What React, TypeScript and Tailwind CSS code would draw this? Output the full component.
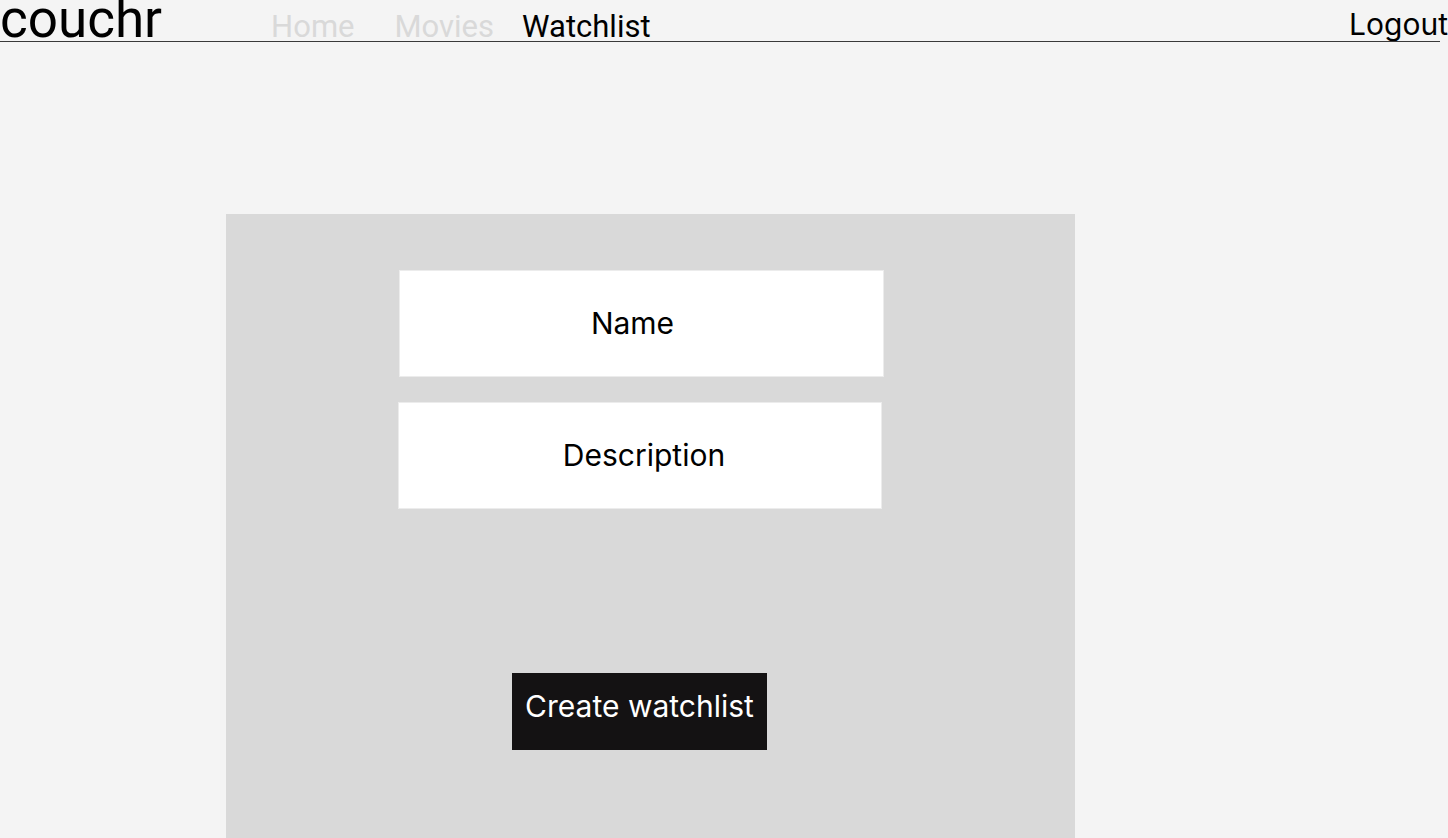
import React from "react";

export default function App() {
  return (
    <div className="h-[838px] overflow-hidden bg-[#f4f4f4] w-[1448px]">
      <header className="relative flex h-[42px] items-start w-[1440px]">
        <div
          className="text-[53px] leading-[38px] text-black"
          style={{ fontFamily: "Roboto, sans-serif" }}
        >
          couchr
        </div>
        <nav
          className="ml-[109px] mt-[11px] flex items-start gap-[40px] text-[31px] leading-none"
          style={{ fontFamily: "Roboto, sans-serif" }}
        >
          <span className="text-[#d9d9d9]">Home</span>
          <span className="text-[#d9d9d9]">Movies</span>
          <span className="-ml-[12px] text-black">Watchlist</span>
        </nav>
        <div
          className="ml-auto mt-[9px] text-[30px] leading-none text-black -mr-[8px]"
          style={{ fontFamily: "Inter, sans-serif" }}
        >
          Logout
        </div>
        <div className="absolute left-0 right-0 bottom-0 h-px bg-[#3a3a3a]" />
      </header>
      <main className="pl-[226px] pt-[172px]">
        <section
          className="w-[849px] h-[624px] bg-[#d9d9d9] flex flex-col"
          style={{ fontFamily: "Inter, sans-serif" }}
        >
          <div className="mt-[56px] ml-[173px] w-[485px] h-[107px] bg-white border border-[#ececec] flex items-center justify-center pr-[18px] text-[30px] text-black">
            Name
          </div>
          <div className="mt-[25px] ml-[172px] w-[484px] h-[107px] bg-white border border-[#ececec] flex items-center justify-center pl-[8px] text-[30px] text-black">
            Description
          </div>
          <div className="mt-[164px] ml-[286px] w-[255px] h-[77px] bg-[#141213] flex items-center justify-center text-[30px] text-white pb-[10px]">
            Create watchlist
          </div>
        </section>
      </main>
    </div>
  );
}
